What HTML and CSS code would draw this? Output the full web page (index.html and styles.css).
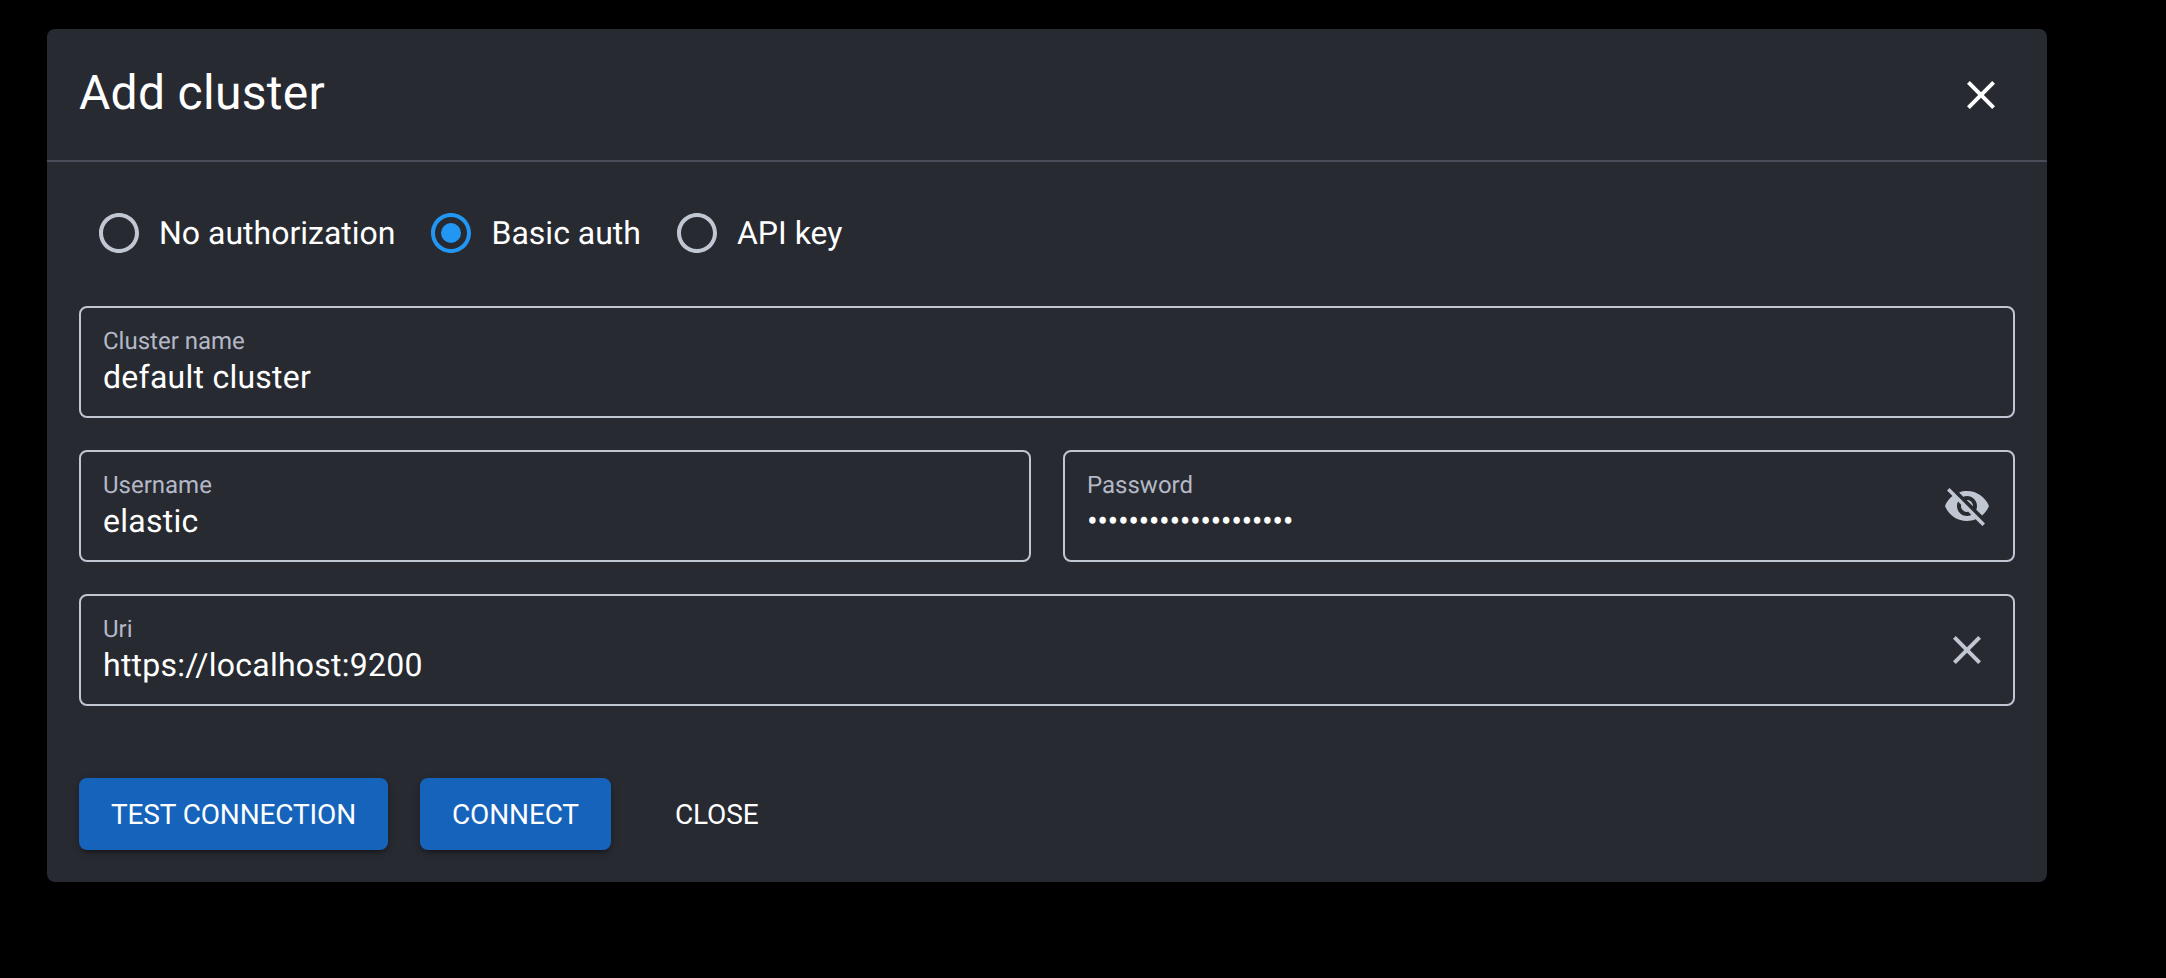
FILE: index.html
```html
<!DOCTYPE html>
<html lang="en">
<head>
<meta charset="utf-8">
<title>Add cluster</title>
<link rel="stylesheet" href="styles.css">
</head>
<body>
<div class="dialog">
  <header class="dialog-header">
    <h2 class="dialog-title">Add cluster</h2>
    <button class="icon-btn icon-white" type="button" aria-label="Close">
      <svg viewBox="0 0 24 24"><path d="M19 6.41 17.59 5 12 10.59 6.41 5 5 6.41 10.59 12 5 17.59 6.41 19 12 13.41 17.59 19 19 17.59 13.41 12z"/></svg>
    </button>
  </header>
  <div class="dialog-content">
    <div class="radio-group">
      <label class="radio-option">
        <span class="radio-box"><svg viewBox="0 0 24 24"><path d="M12 2C6.48 2 2 6.48 2 12s4.48 10 10 10 10-4.48 10-10S17.52 2 12 2zm0 18c-4.42 0-8-3.58-8-8s3.58-8 8-8 8 3.58 8 8-3.58 8-8 8z"/></svg></span>
        <span class="radio-text">No authorization</span>
      </label>
      <label class="radio-option radio-checked">
        <span class="radio-box"><svg viewBox="0 0 24 24"><path d="M12 2C6.48 2 2 6.48 2 12s4.48 10 10 10 10-4.48 10-10S17.52 2 12 2zm0 18c-4.42 0-8-3.58-8-8s3.58-8 8-8 8 3.58 8 8-3.58 8-8 8z"/><circle cx="12" cy="12" r="5"/></svg></span>
        <span class="radio-text">Basic auth</span>
      </label>
      <label class="radio-option">
        <span class="radio-box"><svg viewBox="0 0 24 24"><path d="M12 2C6.48 2 2 6.48 2 12s4.48 10 10 10 10-4.48 10-10S17.52 2 12 2zm0 18c-4.42 0-8-3.58-8-8s3.58-8 8-8 8 3.58 8 8-3.58 8-8 8z"/></svg></span>
        <span class="radio-text">API key</span>
      </label>
    </div>
    <div class="fields">
      <div class="field">
        <div class="field-body">
          <div class="field-label">Cluster name</div>
          <div class="field-value">default cluster</div>
        </div>
      </div>
      <div class="field-row">
        <div class="field">
          <div class="field-body">
            <div class="field-label">Username</div>
            <div class="field-value">elastic</div>
          </div>
        </div>
        <div class="field">
          <div class="field-body">
            <div class="field-label">Password</div>
            <div class="field-value field-secret">••••••••••••••••••••</div>
          </div>
          <button class="icon-btn icon-muted" type="button" aria-label="Toggle password visibility">
            <svg viewBox="0 0 24 24"><path d="M12 7c2.76 0 5 2.24 5 5 0 .65-.13 1.26-.36 1.83l2.92 2.92c1.51-1.26 2.7-2.89 3.43-4.75-1.73-4.39-6-7.5-11-7.5-1.4 0-2.74.25-3.98.7l2.16 2.16C10.74 7.13 11.35 7 12 7zM2 4.27l2.28 2.28.46.46C3.08 8.3 1.78 10.02 1 12c1.73 4.39 6 7.5 11 7.5 1.55 0 3.03-.3 4.38-.84l.42.42L19.73 22 21 20.73 3.27 3 2 4.27zM7.53 9.8l1.55 1.55c-.05.21-.08.43-.08.65 0 1.66 1.34 3 3 3 .22 0 .44-.03.65-.08l1.55 1.55c-.67.33-1.41.53-2.2.53-2.76 0-5-2.24-5-5 0-.79.2-1.53.53-2.2zm4.31-.78l3.15 3.15.02-.16c0-1.66-1.34-3-3-3l-.17.01z"/></svg>
          </button>
        </div>
      </div>
      <div class="field">
        <div class="field-body">
          <div class="field-label">Uri</div>
          <div class="field-value">https://localhost:9200</div>
        </div>
        <button class="icon-btn icon-muted" type="button" aria-label="Clear">
          <svg viewBox="0 0 24 24"><path d="M19 6.41 17.59 5 12 10.59 6.41 5 5 6.41 10.59 12 5 17.59 6.41 19 12 13.41 17.59 19 19 17.59 13.41 12z"/></svg>
        </button>
      </div>
    </div>
    <div class="actions">
      <button class="btn btn-primary" type="button">TEST CONNECTION</button>
      <button class="btn btn-primary" type="button">CONNECT</button>
      <button class="btn btn-text" type="button">CLOSE</button>
    </div>
  </div>
</div>
</body>
</html>
```

FILE: styles.css
```css
* { box-sizing: border-box; }

html, body { height: 100%; }

body {
  margin: 0;
  padding: 29px 0 0 47px;
  background: #000;
  color: #fff;
  font-family: Roboto, "Liberation Sans", sans-serif;
  text-rendering: geometricPrecision;
  overflow: hidden;
}

.dialog {
  width: 2000px;
  height: 853px;
  background: #272a31;
  border-radius: 8px;
  display: flex;
  flex-direction: column;
}

.dialog-header {
  height: 134px;
  padding: 0 42px 0 32px;
  border-bottom: 2px solid #4a4d59;
  display: flex;
  align-items: center;
  justify-content: space-between;
}

.dialog-title {
  margin: 0 0 4px;
  font-size: 48px;
  font-weight: 400;
  line-height: 64px;
  letter-spacing: 0.3px;
}

.icon-btn {
  width: 48px;
  height: 48px;
  padding: 0;
  border: 0;
  background: none;
  display: block;
  flex: none;
}

.icon-btn svg { display: block; width: 48px; height: 48px; fill: currentColor; }
.icon-white { color: #fff; margin-top: 1px; }
.icon-muted { color: #c1c6d3; }

.dialog-content { padding: 29px 32px 32px; }

.radio-group {
  display: flex;
  margin-bottom: 31px;
}

.radio-option {
  display: flex;
  align-items: center;
  margin-right: 16px;
}

.radio-box {
  width: 84px;
  height: 84px;
  padding: 18px;
  color: #c1c6d3;
  margin-left: -2px;
  margin-right: -2px;
}

.radio-box svg { display: block; width: 48px; height: 48px; fill: currentColor; }
.radio-checked .radio-box { color: #2196f3; }

.radio-text {
  font-size: 32px;
  line-height: 48px;
}

.fields { display: flex; flex-direction: column; gap: 32px; }

.field-row { display: grid; grid-template-columns: 1fr 1fr; gap: 32px; }

.field {
  height: 112px;
  border: 2px solid #c1c6d3;
  border-radius: 8px;
  padding: 0 22px;
  display: flex;
  align-items: center;
}

.field-body { flex: 1; min-width: 0; margin-bottom: 2px; }

.field-label {
  font-size: 24px;
  line-height: 32px;
  color: #b4b8c6;
}

.field-value {
  font-size: 32px;
  line-height: 40px;
  letter-spacing: 0.25px;
  white-space: nowrap;
}

.field-secret { letter-spacing: -0.5px; }

.actions { display: flex; gap: 32px; margin-top: 72px; }

.btn {
  height: 72px;
  padding: 0 32px;
  border: 0;
  border-radius: 8px;
  font-family: inherit;
  font-size: 28px;
  font-weight: 400;
  letter-spacing: -0.14px;
  color: #fff;
  background: none;
}

.btn-primary {
  background: #1563ba;
  box-shadow: 0 6px 2px -4px rgba(0,0,0,.2), 0 4px 4px 0 rgba(0,0,0,.14), 0 2px 10px 0 rgba(0,0,0,.12);
}
```
